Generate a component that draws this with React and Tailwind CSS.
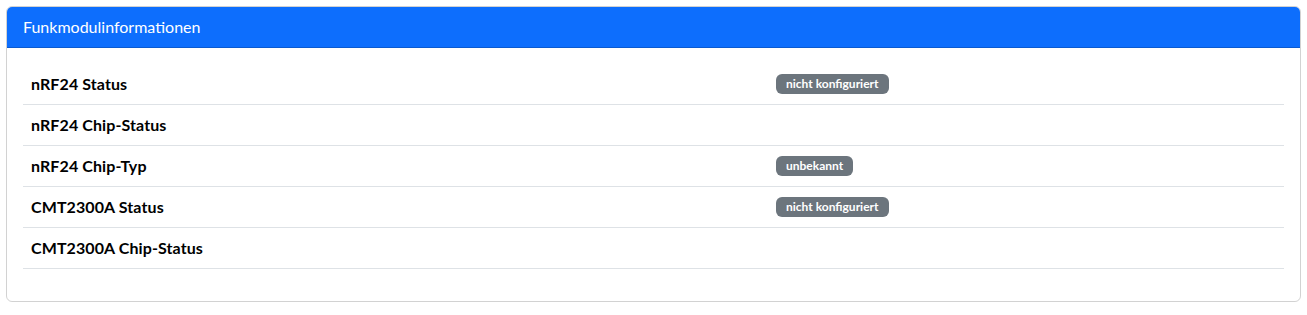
const rows = [
  { label: 'nRF24 Status', badge: 'nicht konfiguriert' },
  { label: 'nRF24 Chip-Status', badge: null },
  { label: 'nRF24 Chip-Typ', badge: 'unbekannt' },
  { label: 'CMT2300A Status', badge: 'nicht konfiguriert' },
  { label: 'CMT2300A Chip-Status', badge: null },
];

const App = () => {
  return (
    <div className="bg-white px-[6px] pt-[6px] pb-[13px] font-['Lato','Liberation_Sans',sans-serif] text-[#212529]">
      <div className="rounded-[6px] border border-black/[0.175] overflow-hidden">
        <div className="bg-[#0d6efd] text-white px-4 py-2 text-base leading-6 border-b border-black/[0.175]">
          Funkmodulinformationen
        </div>
        <div className="p-4">
          <div className="mb-4">
            {rows.map((row) => (
              <div key={row.label} className="flex border-b border-[#dee2e6]">
                <div className="w-[745px] shrink-0 p-2 font-bold leading-6 text-black tracking-[0.1px]">{row.label}</div>
                <div className="flex-1 p-2 leading-6 flex items-center">
                  {row.badge ? (
                    <span className="inline-flex items-center h-[20px] bg-[#6c757d] text-white text-xs font-bold leading-none px-[10px] rounded-[6px]">
                      {row.badge}
                    </span>
                  ) : null}
                </div>
              </div>
            ))}
          </div>
        </div>
      </div>
    </div>
  );
};

export default App;
